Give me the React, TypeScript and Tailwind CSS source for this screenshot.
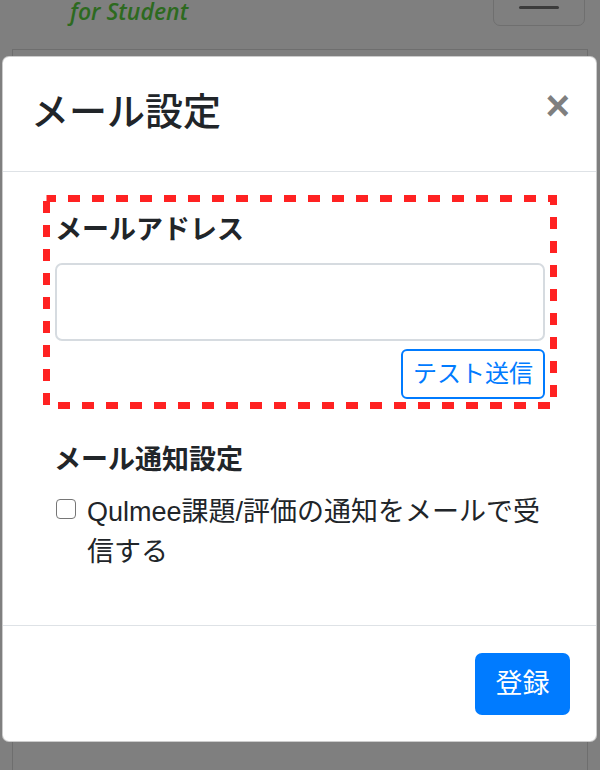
const font = "font-['Liberation_Sans','Noto_Sans_CJK_JP',sans-serif]";

function DashedFrame() {
  // red dashed annotation drawn over the e-mail field group
  return (
    <svg className="pointer-events-none absolute inset-0" width="514" height="214" viewBox="0 0 514 214">
      <rect
        x="3.5"
        y="3.5"
        width="507"
        height="207"
        fill="none"
        stroke="#ff2222"
        strokeWidth="7"
        strokeDasharray="12 12"
        strokeDashoffset="2.5"
      />
    </svg>
  );
}

function BackgroundPage() {
  return (
    <>
      <div className="flex h-[26px] items-start justify-between pl-[70px] pr-[15px]">
        <p className="-mt-[5px] font-['Open_Sans',sans-serif] text-[23px] font-semibold italic leading-[32px] text-[#2d6a1f]">
          for Student
        </p>
        <div className="-mt-[10px] flex h-[36px] w-[92px] flex-col items-center rounded-[7px] border border-[#6f6f6f] pt-[15px]">
          <span className="h-[3px] w-[40px] rounded-full bg-[#3b3b3b]" />
        </div>
      </div>
      <div className="mx-[12px] mt-[23px] h-[800px] border border-[#6e6e6e]" />
    </>
  );
}

export default function App() {
  return (
    <div className={`relative h-[770px] w-[600px] overflow-hidden bg-[#7f7f7f] ${font}`}>
      <BackgroundPage />

      <div className="absolute left-[2px] top-[56px] w-[595px] rounded-[7px] border border-black/20 bg-white text-[#212529]">
        <header className="flex h-[115px] items-center justify-between border-b border-[#dee2e6] pb-[4px] pl-[28px] pr-[26px]">
          <h1 className="text-[38px] font-medium leading-[1.5]">メール設定</h1>
          <button className="mt-[28px] self-start font-['Liberation_Sans',sans-serif] text-[42px] font-bold leading-none text-[#7f7f7f]">
            ×
          </button>
        </header>

        <div className="pb-[53px] pt-[23px]">
          <div className="relative ml-[40px] h-[214px] w-[514px] px-[12px] pt-[15px]">
            <label className="block text-[27px] font-bold leading-[40px]">メールアドレス</label>
            <input
              type="email"
              className="mt-[13px] block h-[78px] w-full rounded-[7px] border-2 border-[#d6dbe0] px-3 text-[27px] outline-none"
            />
            <div className="mt-[8px] flex justify-end">
              <button className="h-[50px] w-[144px] rounded-[6px] border-2 border-[#007bff] text-[24px] leading-none text-[#007bff]">
                テスト送信
              </button>
            </div>
            <DashedFrame />
          </div>

          <div className="pl-[51px] pr-[48px]">
            <h2 className="mt-[31px] text-[27px] font-bold leading-[40px]">メール通知設定</h2>
            <div className="mt-[12px] flex items-start">
              <span className="ml-[2px] mt-[7px] h-[20px] w-[20px] shrink-0 rounded-[4px] border-[1.5px] border-[#767676] bg-white" />
              <p className="ml-[11px] text-[27px] leading-[40px]">Qulmee課題/評価の通知をメールで受信する</p>
            </div>
          </div>
        </div>

        <footer className="flex justify-end border-t border-[#dee2e6] pb-[26px] pr-[26px] pt-[27px]">
          <button className="h-[62px] w-[95px] rounded-[7px] bg-[#007bff] text-[27px] text-white">登録</button>
        </footer>
      </div>
    </div>
  );
}
